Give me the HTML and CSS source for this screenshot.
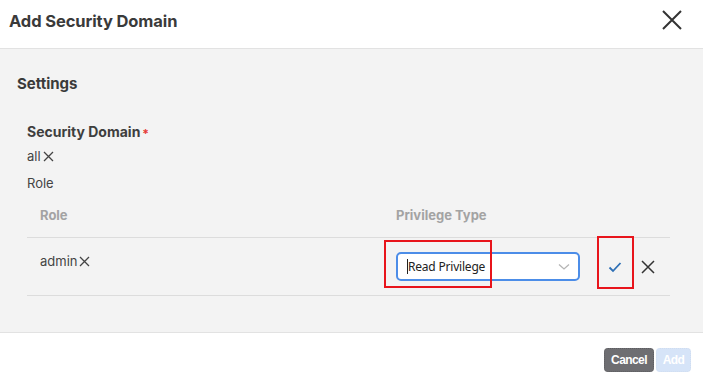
FILE: index.html
```html
<!DOCTYPE html>
<html>
<head>
<meta charset="utf-8">
<link rel="stylesheet" href="styles.css">
</head>
<body>
<div class="dialog">
  <header class="header">
    <h1 class="title">Add Security Domain</h1>
    <button class="close" aria-label="Close">
      <svg width="22" height="22" viewBox="0 0 22 22"><path d="M2 2 L20 20 M20 2 L2 20" stroke="#333" stroke-width="2" fill="none"/></svg>
    </button>
  </header>
  <main class="content">
    <h2 class="section-title">Settings</h2>
    <div class="section">
      <div class="field-label">Security Domain<span class="req">*</span></div>
      <div class="tag">all<svg class="tag-x" width="11" height="11" viewBox="0 0 11 11"><path d="M1 1 L10 10 M10 1 L1 10" stroke="#444" stroke-width="1.3" fill="none"/></svg></div>
      <div class="sub-label">Role</div>
      <div class="table">
        <div class="thead">
          <div class="th col-role">Role</div>
          <div class="th col-priv">Privilege Type</div>
        </div>
        <div class="trow">
          <div class="td col-role"><span class="tag">admin<svg class="tag-x" width="11" height="11" viewBox="0 0 11 11"><path d="M1 1 L10 10 M10 1 L1 10" stroke="#444" stroke-width="1.3" fill="none"/></svg></span></div>
          <div class="td col-priv">
            <div class="select">
              <span class="caret"></span><span class="select-text">Read Privilege</span>
              <svg class="chev" width="12" height="8" viewBox="0 0 12 8"><path d="M1 1.5 L6 6 L11 1.5" stroke="#b5b5b5" stroke-width="1.3" fill="none"/></svg>
            </div>
            <span class="mark mark-select"></span>
          </div>
          <div class="td col-actions">
            <span class="action ok">
              <svg width="14" height="12" viewBox="0 0 14 12"><path d="M1.5 6.5 L5 10 L12.5 2" stroke="#2d6fb5" stroke-width="1.8" fill="none"/></svg>
              <span class="mark mark-ok"></span>
            </span>
            <span class="action cancel-x">
              <svg width="14" height="14" viewBox="0 0 14 14"><path d="M1 1 L13 13 M13 1 L1 13" stroke="#333" stroke-width="1.5" fill="none"/></svg>
            </span>
          </div>
        </div>
      </div>
    </div>
  </main>
  <footer class="footer">
    <button class="btn btn-cancel">Cancel</button>
    <button class="btn btn-add">Add</button>
  </footer>
</div>
</body>
</html>
```
FILE: styles.css
```css
* { box-sizing: border-box; }
html, body { margin: 0; padding: 0; }
body {
  width: 703px;
  height: 379px;
  overflow: hidden;
  font-family: Inter, "Noto Sans", Arial, sans-serif;
  color: #444;
  background: #fff;
}
.dialog { display: flex; flex-direction: column; height: 379px; }
.header {
  height: 49px;
  display: flex;
  align-items: center;
  justify-content: space-between;
  padding: 0 20px 0 9px;
  border-bottom: 1px solid #e2e2e2;
  background: #fff;
}
.title {
  margin: 0;
  font-size: 16.5px;
  font-weight: 700;
  color: #3a3a3a;
  letter-spacing: -0.1px;
  position: relative;
  top: -3px;
}
.close {
  border: 0;
  background: none;
  padding: 0;
  width: 22px;
  height: 22px;
  position: relative;
  top: -4px;
  cursor: pointer;
}
.close svg { display: block; }
.content {
  height: 284px;
  background: #f3f3f3;
  padding: 25px 33px 0 17px;
  border-bottom: 1px solid #e2e2e2;
}
.section-title {
  margin: 0;
  font-size: 15px;
  line-height: 20px;
  font-weight: 700;
  color: #3a3a3a;
}
.section { padding: 29px 0 0 10px; }
.field-label {
  font-size: 14px;
  font-weight: 700;
  line-height: 18px;
  color: #3e3e3e;
}
.req { color: #e53935; font-size: 12px; margin-left: 2px; position: relative; top: 1px; }
.tag {
  display: inline-flex;
  align-items: center;
  font-size: 13px;
  line-height: 18px;
  color: #444;
}
.section > .tag { margin-top: 5px; }
.tag-x { margin-left: 2px; margin-top: 1px; }
.sub-label {
  font-size: 13px;
  line-height: 18px;
  color: #444;
  margin-top: 9px;
}
.table { margin-top: 4px; width: 643px; }
.thead {
  display: flex;
  height: 42px;
  align-items: center;
  border-bottom: 1px solid #dcdcdc;
}
.th {
  font-size: 13px;
  font-weight: 700;
  color: #a3a3a3;
  padding-left: 13px;
  position: relative;
  top: -2px;
}
.col-role { width: 356px; flex: none; }
.col-priv { width: 214px; flex: none; }
.trow {
  display: flex;
  height: 58px;
  border-bottom: 1px solid #dcdcdc;
}
.td { position: relative; }
.td.col-role { padding: 12px 0 0 13px; }
.td.col-priv { padding: 14px 0 0 13px; display: flex; }
.select {
  width: 184px;
  height: 29px;
  border: 2px solid #4c8de8;
  border-radius: 5px;
  background: #fff;
  display: flex;
  align-items: center;
  padding: 0 8px 0 9px;
  font-family: "Noto Sans", "Open Sans", sans-serif;
  font-size: 12px;
  letter-spacing: -0.2px;
  color: #222;
}
.caret { width: 1px; height: 15px; background: #222; flex: none; }
.select-text { flex: 1; }
.chev { flex: none; }
.mark {
  position: absolute;
  border: 2px solid #e8141b;
  pointer-events: none;
}
.mark-select { left: 1px; top: 2px; width: 108px; height: 48px; }
.col-actions {
  display: flex;
  align-items: center;
  flex: none;
  padding-left: 11px;
}
.action {
  position: relative;
  display: inline-flex;
  align-items: center;
  justify-content: center;
}
.ok { width: 14px; height: 14px; }
.mark-ok { left: -11px; top: -24px; width: 37px; height: 53px; }
.cancel-x { margin-left: 19px; }
.footer {
  flex: 1;
  display: flex;
  justify-content: flex-end;
  align-items: flex-start;
  padding: 15px 12px 0 0;
  gap: 2px;
  background: #fff;
}
.btn {
  height: 24px;
  border: 1px dotted rgba(0,0,0,0.15);
  border-radius: 4px;
  font-family: "Liberation Sans", Arial, sans-serif;
  font-weight: 700;
  font-size: 12px;
  letter-spacing: -0.6px;
  color: #fff;
  padding: 0;
  cursor: pointer;
}
.btn-cancel { width: 50px; background: #6e6e72; }
.btn-add { width: 35px; background: #d6e4f8; border-color: #d0ddf0; }
```
